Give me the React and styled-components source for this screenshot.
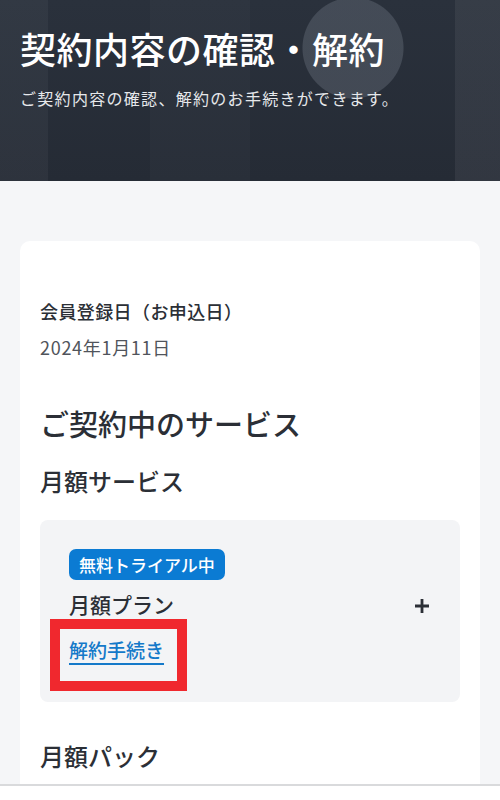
import React from 'react'
import styled, { createGlobalStyle } from 'styled-components'

const GlobalStyle = createGlobalStyle`
  html, body {
    margin: 0;
    padding: 0;
    background: #f5f6f8;
  }
  body {
    font-family: "Noto Sans CJK JP", "Noto Sans", sans-serif;
    color: #2b2f36;
  }
`

const Page = styled.div`
  width: 500px;
  height: 800px;
  display: flex;
  flex-direction: column;
  overflow: hidden;
  background: #f5f6f8;
`

const Hero = styled.header`
  height: 181px;
  flex-shrink: 0;
  box-sizing: border-box;
  padding: 22px 20px 0;
  background:
    radial-gradient(circle at 353px 48px, rgba(110, 118, 130, 0.38) 0, rgba(110, 118, 130, 0.38) 50px, transparent 51px),
    linear-gradient(90deg, rgba(255,255,255,0.04) 0 48px, transparent 48px 150px, rgba(255,255,255,0.02) 150px 250px, transparent 250px 455px, rgba(255,255,255,0.06) 455px),
    linear-gradient(180deg, #2a313c 0%, #252b35 100%);
`

const HeroTitle = styled.h1`
  margin: 0;
  font-size: 36px;
  font-weight: 500;
  line-height: 52px;
  color: #ffffff;
  letter-spacing: 0.5px;
`

const HeroLead = styled.p`
  margin: 12px 0 0;
  font-size: 16px;
  line-height: 24px;
  color: #e6e8eb;
  letter-spacing: 1.3px;
`

const Body = styled.main`
  flex: 1;
  padding: 60px 20px 0;
  display: flex;
  flex-direction: column;
  min-height: 0;
`

const Card = styled.section`
  flex: 1;
  background: #ffffff;
  border-radius: 10px 10px 0 0;
  padding: 55px 20px 0;
  display: flex;
  flex-direction: column;
`

const Label = styled.div`
  font-size: 18px;
  font-weight: 500;
  line-height: 30px;
  color: #2b2f36;
  letter-spacing: 0.4px;
`

const Value = styled.div`
  margin-top: 8px;
  font-size: 18px;
  line-height: 26px;
  color: #50545b;
  letter-spacing: 0.7px;
`

const SectionTitle = styled.h2`
  margin: 43px 0 0;
  font-size: 29px;
  font-weight: 500;
  line-height: 40px;
  color: #2b2f36;
`

const SubTitle = styled.h3`
  margin: ${p => p.$top || 21}px 0 0;
  font-size: 24px;
  font-weight: 500;
  line-height: 34px;
  color: #2b2f36;
`

const PlanBox = styled.div`
  margin-top: 22px;
  height: 182px;
  box-sizing: border-box;
  background: #f3f4f6;
  border-radius: 8px;
  padding: 29px 30px 0 29px;
  display: flex;
  flex-direction: column;
  align-items: flex-start;
`

const Badge = styled.span`
  display: inline-block;
  background: #0b7bd3;
  color: #ffffff;
  font-size: 17px;
  font-weight: 500;
  line-height: 31px;
  padding: 0 10px;
  border-radius: 7px;
`

const PlanRow = styled.div`
  align-self: stretch;
  display: flex;
  justify-content: space-between;
  align-items: center;
  margin-top: 9px;
`

const PlanName = styled.div`
  font-size: 21px;
  font-weight: 500;
  line-height: 30px;
  color: #2b2f36;
`

const PlusIcon = styled.svg`
  width: 16px;
  height: 16px;
  margin-top: 3px;
`

const Highlight = styled.div`
  margin: 0 0 0 -19px;
  padding: 6px 13px 0 9px;
  height: 72px;
  box-sizing: border-box;
  border: 10px solid #f0282e;
`

const CancelLink = styled.a`
  font-size: 19px;
  font-weight: 500;
  line-height: 30px;
  color: #1479c9;
  text-decoration: underline;
  text-underline-offset: 5px;
  text-decoration-thickness: 1.5px;
`

const BottomBar = styled.div`
  height: 14px;
  flex-shrink: 0;
  background: #ffffff;
  border-top: 2px solid #d9dadc;
`

export default function App() {
  return (
    <Page>
      <GlobalStyle />
      <Hero>
        <HeroTitle>契約内容の確認・解約</HeroTitle>
        <HeroLead>ご契約内容の確認、解約のお手続きができます。</HeroLead>
      </Hero>
      <Body>
        <Card>
          <Label>会員登録日（お申込日）</Label>
          <Value>2024年1月11日</Value>
          <SectionTitle>ご契約中のサービス</SectionTitle>
          <SubTitle>月額サービス</SubTitle>
          <PlanBox>
            <Badge>無料トライアル中</Badge>
            <PlanRow>
              <PlanName>月額プラン</PlanName>
              <PlusIcon viewBox="0 0 16 16">
                <path d="M8 1v14M1 8h14" stroke="#2b2f36" strokeWidth="2.8" />
              </PlusIcon>
            </PlanRow>
            <Highlight>
              <CancelLink href="#">解約手続き</CancelLink>
            </Highlight>
          </PlanBox>
          <SubTitle $top={37}>月額パック</SubTitle>
        </Card>
      </Body>
      <BottomBar />
    </Page>
  )
}
